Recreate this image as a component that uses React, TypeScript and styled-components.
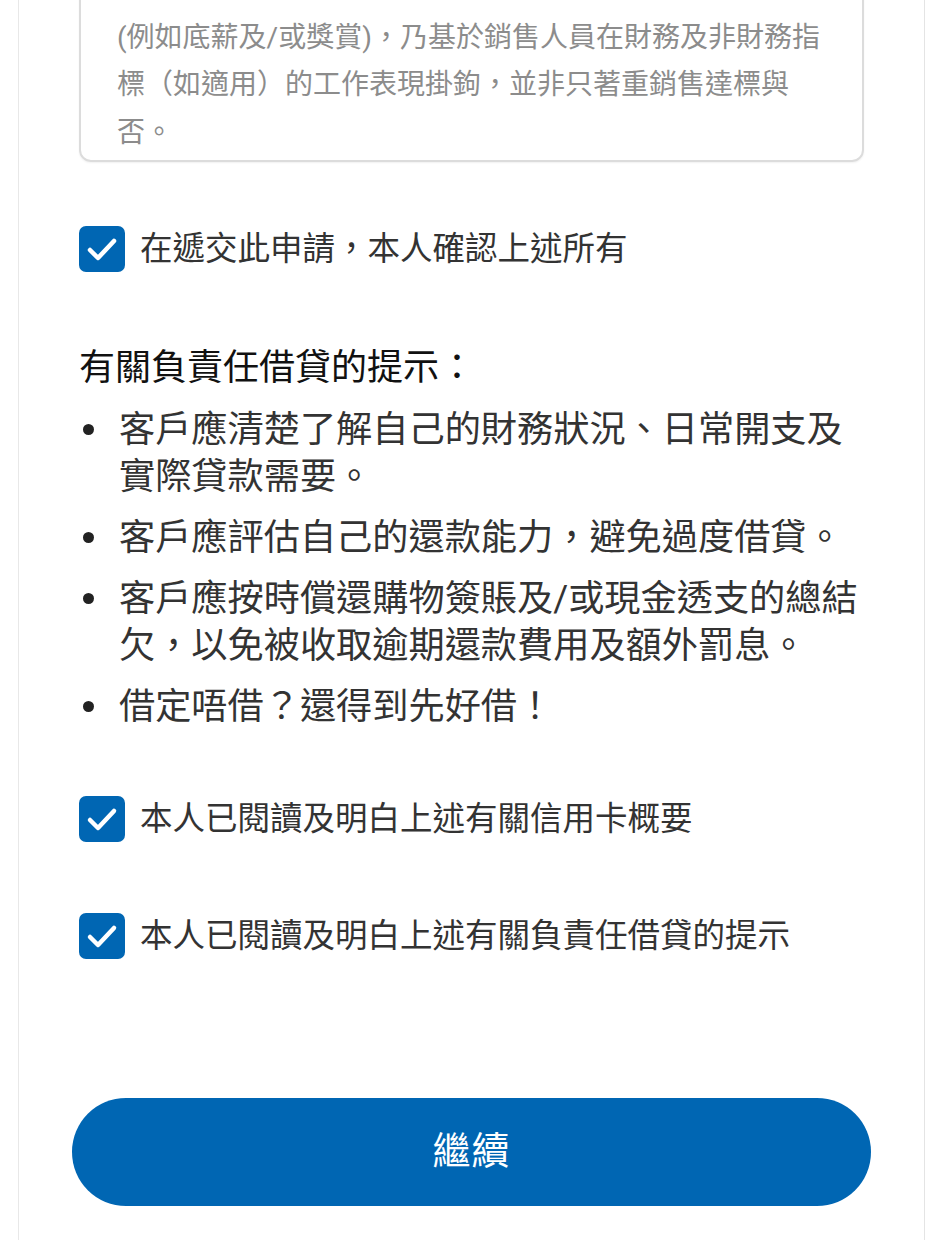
import styled, { createGlobalStyle } from "styled-components";

const GlobalStyle = createGlobalStyle`
  html, body {
    margin: 0;
    padding: 0;
    background: #ffffff;
  }
  body {
    font-family: "Roboto", "Noto Sans CJK TC", sans-serif;
    -webkit-font-smoothing: antialiased;
  }
`;

const Page = styled.div`
  height: 1240px;
  overflow: hidden;
  background: #ffffff;
`;

const Card = styled.div`
  margin: 0 3px 0 18px;
  min-height: 1240px;
  border-left: 1px solid #e8e8e8;
  border-right: 1px solid #e4e4e4;
  padding: 0 60px;
  display: flex;
  flex-direction: column;
`;

// the terms box is scrolled: only its lower part is in view
const TermsBox = styled.div`
  margin-top: -42px;
  border: 2px solid #dcdcdc;
  border-radius: 12px;
  box-shadow: 0 1px 2px rgba(0, 0, 0, 0.06);
  padding: 0 30px 4px 36px;
  color: #8c8c8c;
  font-size: 28px;
  line-height: 47.5px;
`;

const TermsLine = styled.div<{ $partial?: boolean }>`
  white-space: nowrap;
  margin-bottom: ${(p) => (p.$partial ? 6 : 0)}px;
`;

const CheckRow = styled.label<{ $top: number }>`
  display: flex;
  align-items: center;
  gap: 15px;
  margin-top: ${(p) => p.$top}px;
  color: #333333;
  font-size: 32.5px;
  line-height: 46px;
`;

const Box = styled.span`
  flex: none;
  width: 46px;
  height: 46px;
  border-radius: 7px;
  background: #0066b3;
  display: flex;
  align-items: center;
  justify-content: center;
`;

const Heading = styled.h2`
  margin: 73px 0 0;
  font-size: 36px;
  font-weight: 400;
  line-height: 47px;
  color: #111111;
`;

const List = styled.ul`
  list-style: none;
  margin: 14px 0 0;
  padding: 0;
  display: flex;
  flex-direction: column;
  gap: 14px;
`;

const Item = styled.li`
  display: grid;
  grid-template-columns: 40px 1fr;
  font-size: 36.2px;
  line-height: 47px;
  color: #333333;
`;

const Dot = styled.span`
  width: 11px;
  height: 11px;
  border-radius: 50%;
  background: #222222;
  margin: 18px 0 0 4px;
`;

const ButtonWrap = styled.div`
  margin: 139px -7px 0;
`;

const Continue = styled.button`
  width: 100%;
  height: 108px;
  border: none;
  border-radius: 54px;
  background: #0066b3;
  color: #ffffff;
  font-family: "Roboto", "Noto Sans CJK TC", sans-serif;
  font-size: 38px;
  font-weight: 400;
  letter-spacing: 1px;
  padding: 0 0 10px;
`;

const Check = () => (
  <Box>
    <svg width="34" height="34" viewBox="0 0 34 34" fill="none">
      <path
        d="M5 18 L13 26 L29 9"
        stroke="#ffffff"
        strokeWidth="4.5"
        strokeLinecap="round"
        strokeLinejoin="round"
      />
    </svg>
  </Box>
);

const termsLines = [
  "(c) 銷售人員的薪酬 (如有) 乃按其表現釐定",
  "(例如底薪及/或獎賞)，乃基於銷售人員在財務及非財務指",
  "標（如適用）的工作表現掛鉤，並非只著重銷售達標與",
  "否。",
];

const tips = [
  "客戶應清楚了解自己的財務狀況、日常開支及實際貸款需要。",
  "客戶應評估自己的還款能力，避免過度借貸。",
  "客戶應按時償還購物簽賬及/或現金透支的總結欠，以免被收取逾期還款費用及額外罰息。",
  "借定唔借？還得到先好借！",
];

const App = () => {
  return (
    <Page>
      <GlobalStyle />
      <Card>
        <TermsBox>
          {termsLines.map((line, i) => (
            <TermsLine key={line} $partial={i === 0}>
              {line}
            </TermsLine>
          ))}
        </TermsBox>

        <CheckRow $top={64}>
          <Check />
          在遞交此申請，本人確認上述所有
        </CheckRow>

        <Heading>有關負責任借貸的提示：</Heading>
        <List>
          {tips.map((tip) => (
            <Item key={tip}>
              <Dot />
              <span>{tip}</span>
            </Item>
          ))}
        </List>

        <CheckRow $top={66}>
          <Check />
          本人已閱讀及明白上述有關信用卡概要
        </CheckRow>
        <CheckRow $top={71}>
          <Check />
          本人已閱讀及明白上述有關負責任借貸的提示
        </CheckRow>

        <ButtonWrap>
          <Continue>繼續</Continue>
        </ButtonWrap>
      </Card>
    </Page>
  );
};

export default App;
